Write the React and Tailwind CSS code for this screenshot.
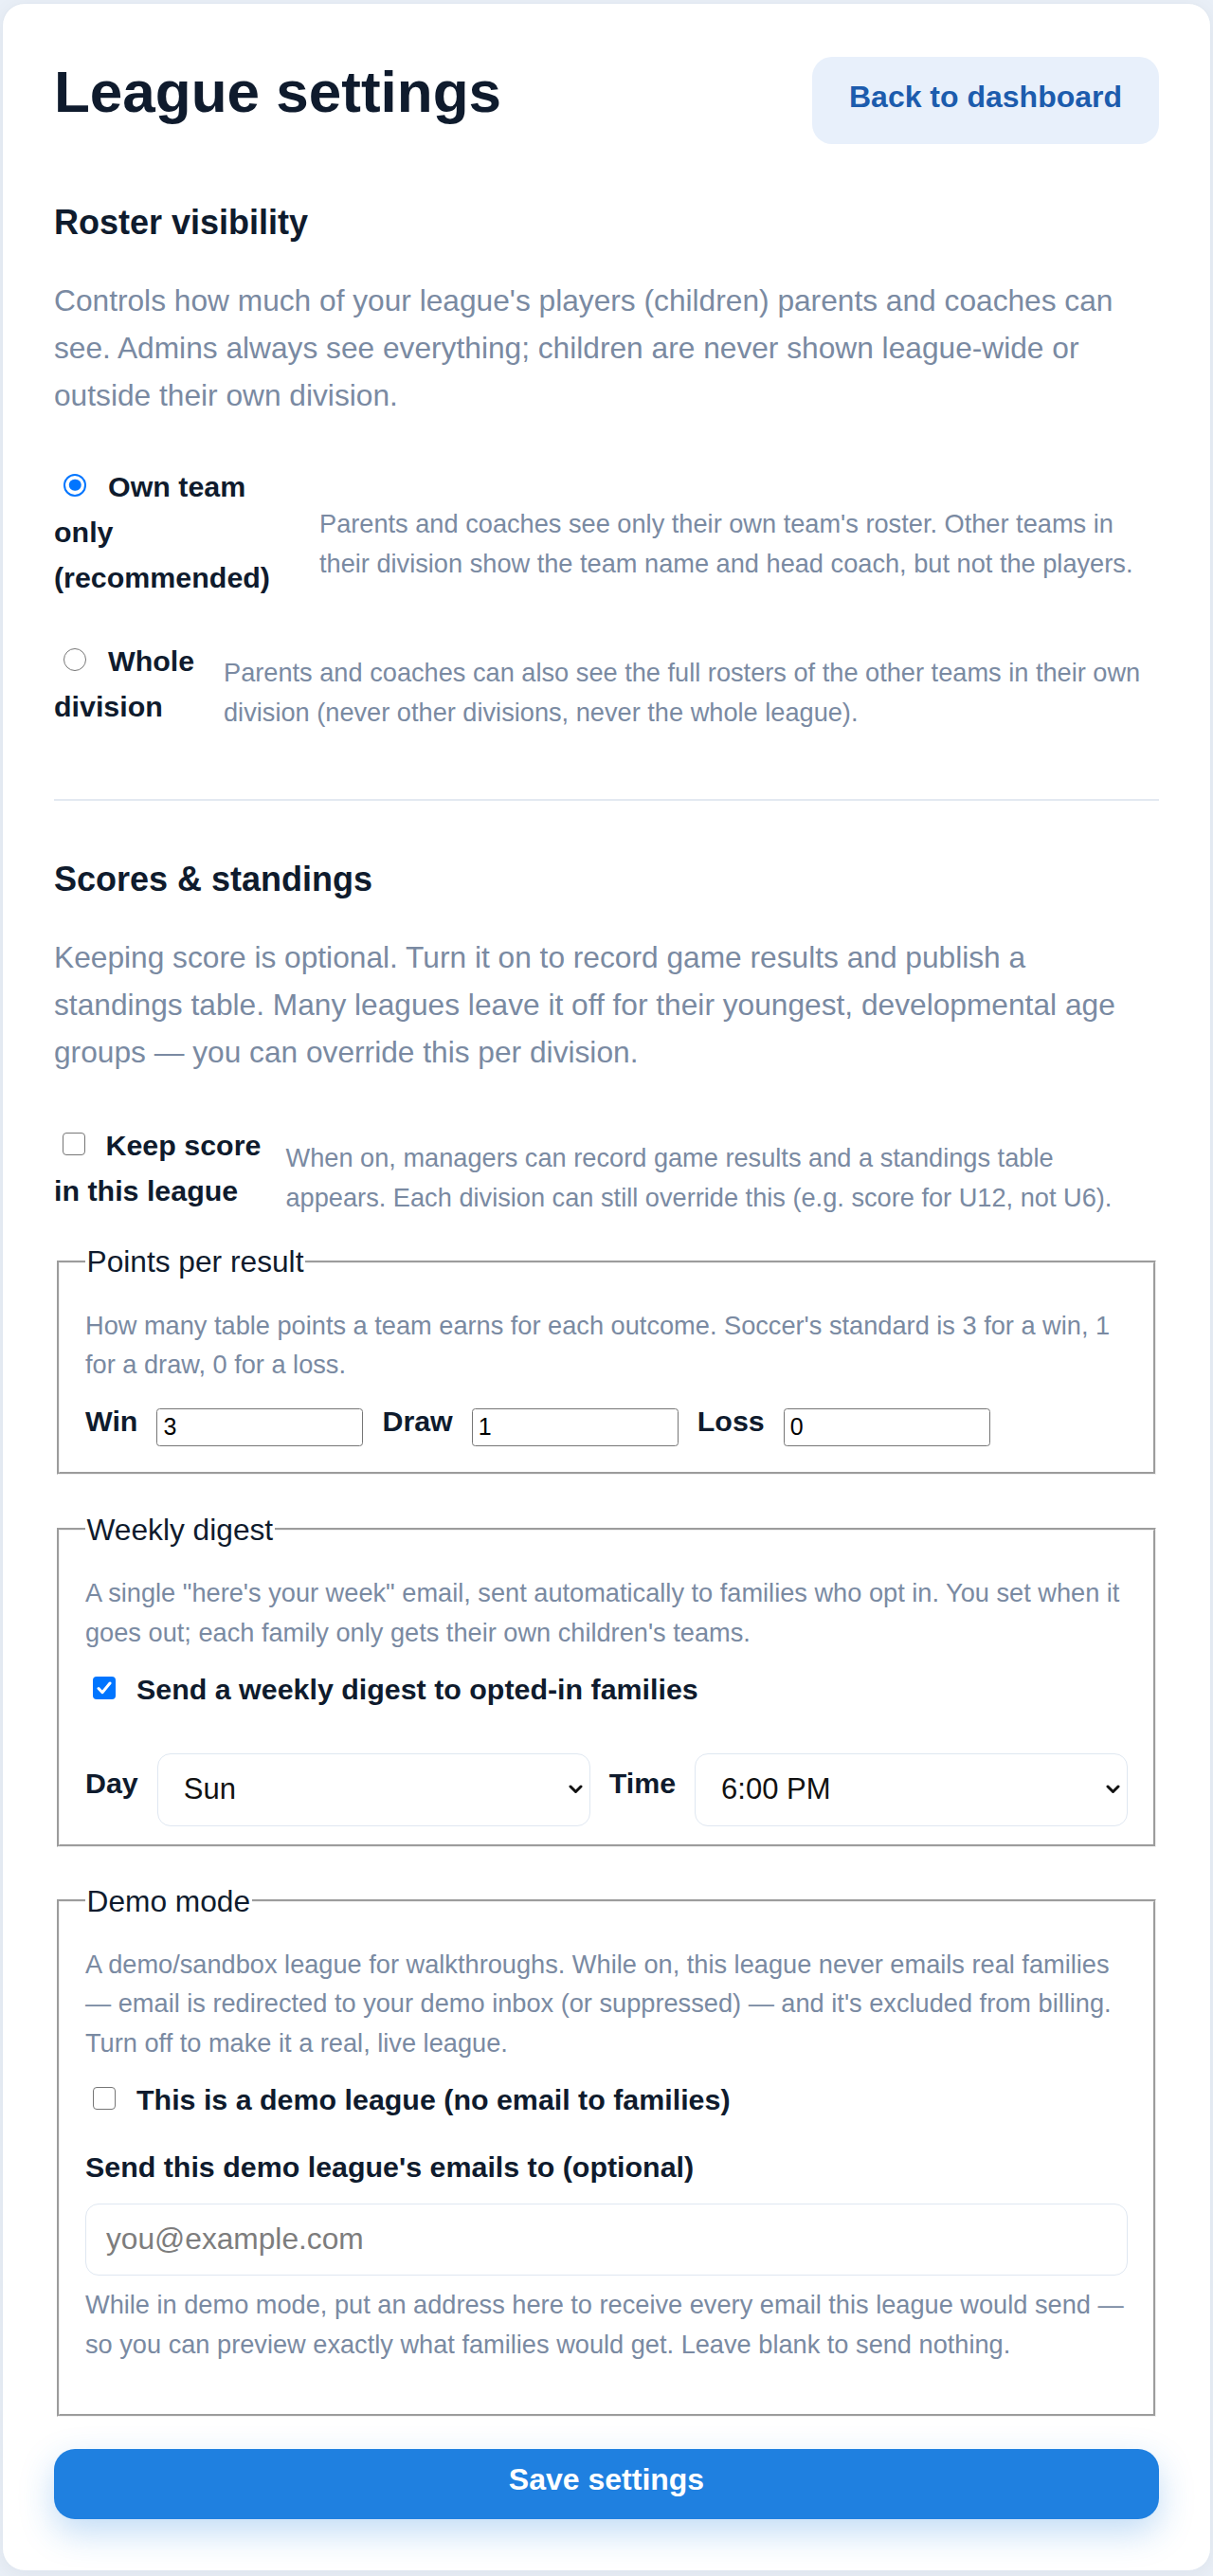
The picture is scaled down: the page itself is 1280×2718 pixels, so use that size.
import React from "react";

function Chevron() {
  return (
    <svg
      className="pointer-events-none absolute right-[8px] top-1/2 -translate-y-1/2"
      width="15"
      height="10"
      viewBox="0 0 15 10"
      fill="none"
    >
      <path d="M2 2l5.5 5.5L13 2" stroke="#111111" strokeWidth="3" strokeLinecap="round" strokeLinejoin="round" />
    </svg>
  );
}

function Radio({ checked }) {
  return checked ? (
    <span className="relative mr-[23px] ml-[10px] inline-block h-[24px] w-[24px] rounded-full border-[2.8px] border-[#0075ff] bg-white align-baseline">
      <span className="absolute top-1/2 left-1/2 h-[12.5px] w-[12.5px] -translate-x-1/2 -translate-y-1/2 rounded-full bg-[#0075ff]" />
    </span>
  ) : (
    <span className="relative mr-[23px] ml-[10px] inline-block h-[24px] w-[24px] rounded-full border-[1.8px] border-[#767676] bg-white align-baseline" />
  );
}

function Check({ checked, className }) {
  return checked ? (
    <span className={`relative inline-block h-[24px] w-[24px] rounded-[4px] bg-[#0075ff] align-baseline ${className}`}>
      <svg className="absolute top-0 left-0" width="24" height="24" viewBox="0 0 24 24" fill="none">
        <path d="M6 12.5l4 4.2L18 7" stroke="#ffffff" strokeWidth="3" strokeLinecap="round" strokeLinejoin="round" />
      </svg>
    </span>
  ) : (
    <span className={`relative inline-block h-[24px] w-[24px] rounded-[4px] border-[1.8px] border-[#767676] bg-white align-baseline ${className}`} />
  );
}

export default function App() {
  return (
    <div className="min-h-screen bg-[#e9eff7] px-[2px] pt-[3px] pb-[2px] font-['Liberation_Sans',Arial,sans-serif] text-[#0f1b2d]">
      <div className="rounded-[24px] border-[1.5px] border-[#e1e8f1] bg-white px-[54px] pt-[55.5px] pb-[54.5px] shadow-[0_4px_20px_rgba(15,27,45,0.05)]">
        {/* Header */}
        <header className="flex items-start justify-between">
          <h1 className="text-[62px] leading-[73px] font-bold">League settings</h1>
          <button className="flex h-[92px] w-[366px] items-center justify-center rounded-[21px] bg-[#e8f0fb] pb-[8px] text-[32px] font-bold text-[#1c5cad]">
            Back to dashboard
          </button>
        </header>

        {/* Roster visibility */}
        <h2 className="mt-[61.8px] text-[36px] leading-[44px] font-bold">Roster visibility</h2>
        <p className="mt-[34.5px] text-[31.7px] leading-[50px] text-[#7a8aa2]">
          Controls how much of your league's players (children) parents and coaches can see. Admins always see everything; children are never shown league-wide or outside their own division.
        </p>

        <div className="mt-[47.2px] flex items-start">
          <label className="w-[250px] shrink-0 text-[30.4px] leading-[48px] font-bold">
            <Radio checked />
            Own team only (recommended)
          </label>
          <p className="mt-[43px] ml-[30px] flex-1 text-[27.2px] leading-[41.6px] text-[#7a8aa2]">
            Parents and coaches see only their own team's roster. Other teams in their division show the team name and head coach, but not the players.
          </p>
        </div>

        <div className="mt-[40px] flex items-start">
          <label className="w-[155px] shrink-0 text-[30.4px] leading-[48px] font-bold">
            <Radio />
            Whole division
          </label>
          <p className="mt-[16.3px] ml-[24px] flex-1 text-[27.2px] leading-[41.6px] text-[#7a8aa2]">
            Parents and coaches can also see the full rosters of the other teams in their own division (never other divisions, never the whole league).
          </p>
        </div>

        <div className="mt-[71px] h-[2px] bg-[#e3e9f1]" />

        {/* Scores & standings */}
        <h2 className="mt-[60.2px] text-[36px] leading-[44px] font-bold">Scores &amp; standings</h2>
        <p className="mt-[35.5px] text-[31.7px] leading-[50px] text-[#7a8aa2]">
          Keeping score is optional. Turn it on to record game results and publish a standings table. Many leagues leave it off for their youngest, developmental age groups — you can override this per division.
        </p>

        <div className="mt-[49.3px] flex items-start">
          <label className="w-[230px] shrink-0 text-[30.4px] leading-[48px] font-bold">
            <Check className="mr-[21.5px] ml-[9px]" />
            Keep score in this league
          </label>
          <p className="mt-[16.5px] ml-[14.5px] flex-1 pr-[8px] text-[27.2px] leading-[41.6px] text-[#7a8aa2]">
            When on, managers can record game results and a standings table appears. Each division can still override this (e.g. score for U12, not U6).
          </p>
        </div>

        {/* Points per result */}
        <fieldset className="mx-[3px] mt-[23px] border-[3.5px] border-[#f0f0f0] [--tw-border-style:groove] [border-style:groove] px-[27px] pt-[22.4px] pb-[15.9px]">
          <legend className="px-[1.5px] text-[31.7px] leading-[48px]">Points per result</legend>
          <p className="text-[27.2px] leading-[41.6px] text-[#7a8aa2]">
            How many table points a team earns for each outcome. Soccer's standard is 3 for a win, 1 for a draw, 0 for a loss.
          </p>
          <div className="mt-[14.2px] flex items-center gap-[20px]">
            <span className="mb-[13.8px] text-[30.4px] leading-[48px] font-bold">Win</span>
            <input type="text" defaultValue="3" className="h-[40px] w-[218px] rounded-[3.5px] border-[1.7px] border-[#767676] pl-[6px] font-['Liberation_Sans',Arial,sans-serif] text-[25px] text-black" />
            <span className="mb-[13.8px] text-[30.4px] leading-[48px] font-bold">Draw</span>
            <input type="text" defaultValue="1" className="h-[40px] w-[218px] rounded-[3.5px] border-[1.7px] border-[#767676] pl-[6px] font-['Liberation_Sans',Arial,sans-serif] text-[25px] text-black" />
            <span className="mb-[13.8px] text-[30.4px] leading-[48px] font-bold">Loss</span>
            <input type="text" defaultValue="0" className="h-[40px] w-[218px] rounded-[3.5px] border-[1.7px] border-[#767676] pl-[6px] font-['Liberation_Sans',Arial,sans-serif] text-[25px] text-black" />
          </div>
        </fieldset>

        {/* Weekly digest */}
        <fieldset className="mx-[3px] mt-[34.3px] border-[3.5px] border-[#f0f0f0] [--tw-border-style:groove] [border-style:groove] px-[27px] pt-[22.5px] pb-[19px]">
          <legend className="px-[1.5px] text-[31.7px] leading-[48px]">Weekly digest</legend>
          <p className="text-[27.2px] leading-[41.6px] text-[#7a8aa2]">
            A single "here's your week" email, sent automatically to families who opt in. You set when it goes out; each family only gets their own children's teams.
          </p>
          <label className="mt-[14.1px] block text-[30.4px] leading-[48px] font-bold">
            <Check checked className="mr-[22px] ml-[8px]" />
            Send a weekly digest to opted-in families
          </label>
          <div className="mt-[43.9px] flex items-center gap-[20px]">
            <span className="mb-[13.8px] text-[30.4px] leading-[48px] font-bold">Day</span>
            <div className="relative flex-1">
              <select defaultValue="Sun" className="h-[77px] w-full appearance-none rounded-[14px] border-[1.7px] border-[#dfe7f1] bg-white pl-[27px] text-[31px] text-[#111111]">
                <option>Sun</option>
                <option>Mon</option>
                <option>Tue</option>
                <option>Wed</option>
                <option>Thu</option>
                <option>Fri</option>
                <option>Sat</option>
              </select>
              <Chevron />
            </div>
            <span className="mb-[13.8px] text-[30.4px] leading-[48px] font-bold">Time</span>
            <div className="relative flex-1">
              <select defaultValue="6:00 PM" className="h-[77px] w-full appearance-none rounded-[14px] border-[1.7px] border-[#dfe7f1] bg-white pl-[27px] text-[31px] text-[#111111]">
                <option>8:00 AM</option>
                <option>12:00 PM</option>
                <option>6:00 PM</option>
                <option>8:00 PM</option>
              </select>
              <Chevron />
            </div>
          </div>
        </fieldset>

        {/* Demo mode */}
        <fieldset className="mx-[3px] mt-[33.1px] border-[3.5px] border-[#f0f0f0] [--tw-border-style:groove] [border-style:groove] px-[27px] pt-[22px] pb-[52.6px]">
          <legend className="px-[1.5px] text-[31.7px] leading-[48px]">Demo mode</legend>
          <p className="text-[27.2px] leading-[41.6px] text-[#7a8aa2]">
            A demo/sandbox league for walkthroughs. While on, this league never emails real families — email is redirected to your demo inbox (or suppressed) — and it's excluded from billing. Turn off to make it a real, live league.
          </p>
          <label className="mt-[14.1px] block text-[30.4px] leading-[48px] font-bold">
            <Check className="mr-[22px] ml-[8px]" />
            This is a demo league (no email to families)
          </label>
          <label className="mt-[23.6px] mb-[14.5px] block text-[30.4px] leading-[48px] font-bold">
            Send this demo league's emails to (optional)
          </label>
          <input
            type="email"
            placeholder="you@example.com"
            className="h-[76px] w-full rounded-[14px] border-[1.7px] border-[#dfe7f1] bg-white pl-[21px] text-[31.7px] text-[#111111] placeholder:text-[#7d7d7d]"
          />
          <p className="mt-[10.8px] -mr-[8px] text-[27.2px] leading-[41.6px] text-[#7a8aa2]">
            While in demo mode, put an address here to receive every email this league would send — so you can preview exactly what families would get. Leave blank to send nothing.
          </p>
        </fieldset>

        <button className="mt-[33.6px] flex h-[74px] w-full items-center justify-center rounded-[22px] bg-[#1f80e0] pb-[10px] text-[32px] font-bold text-white shadow-[0_14px_36px_rgba(31,128,224,0.28)]">
          Save settings
        </button>
      </div>
    </div>
  );
}
